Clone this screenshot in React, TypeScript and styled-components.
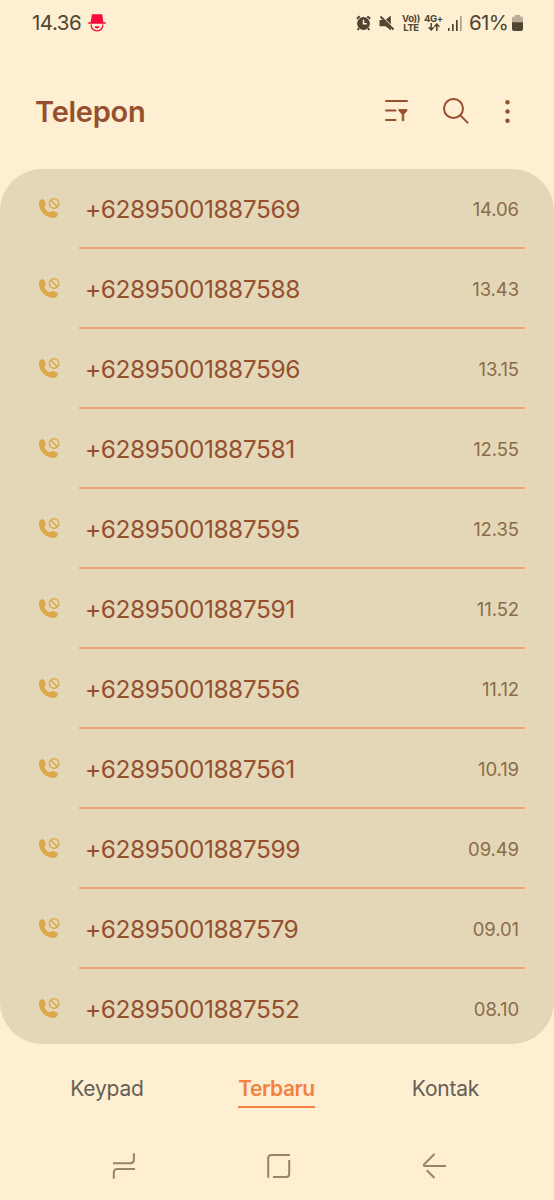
import React from "react";
import styled, { createGlobalStyle, css } from "styled-components";

const GlobalStyle = createGlobalStyle`
  * { box-sizing: border-box; }
  body { margin: 0; background: #feeed2; }
`;

const Screen = styled.div`
  width: 554px;
  height: 1200px;
  display: flex;
  flex-direction: column;
  overflow: hidden;
  background: #feeed2;
  font-family: Inter, Roboto, sans-serif;
`;

const StatusBar = styled.header`
  height: 46px;
  display: flex;
  align-items: center;
  padding: 0 31px 0 32px;
  color: #4f4632;
`;

const StatusText = styled.span<{ $width: number; $spacing: number; $gap?: number }>`
  width: ${(p) => p.$width}px;
  margin-left: ${(p) => p.$gap ?? 0}px;
  font-size: 20.5px;
  line-height: 24px;
  letter-spacing: ${(p) => p.$spacing}px;
  white-space: nowrap;
`;

const StatusIcons = styled.div`
  display: flex;
  align-items: center;
  margin-left: auto;
`;

const Icon = styled.svg<{ $gap?: number }>`
  display: block;
  flex: none;
  overflow: visible;
  margin-left: ${(p) => p.$gap ?? 0}px;
`;

const Network = styled.div<{ $gap: number; $width: number }>`
  display: flex;
  flex-direction: column;
  align-items: center;
  width: ${(p) => p.$width}px;
  height: 18px;
  margin-left: ${(p) => p.$gap}px;
  font-size: 9.5px;
  font-weight: 700;
  line-height: 9px;
  letter-spacing: -0.4px;
  white-space: nowrap;
`;

const TitleBar = styled.div`
  height: 123px;
  display: flex;
  align-items: center;
  padding: 7px 44px 0 35px;
  color: #94502f;
`;

const Title = styled.h1`
  flex: 1;
  margin: 0;
  padding-top: 1px;
  font-size: 29px;
  font-weight: 600;
  line-height: 36px;
  letter-spacing: -0.25px;
`;

const CallList = styled.ul`
  height: 875px;
  margin: 0;
  padding: 0;
  list-style: none;
  overflow: hidden;
  border-radius: 42px;
  background: #e4d7b8;
`;

const CallRow = styled.li`
  height: 80px;
  display: flex;
  padding: 0 29px 0 39px;
`;

const CallGlyph = styled.div`
  width: 40px;
  padding-top: 29px;
`;

const CallBody = styled.div<{ $last: boolean }>`
  flex: 1;
  display: flex;
  align-items: flex-start;
  justify-content: space-between;
  padding: 25px 6px 0 6px;
  border-bottom: 2px solid ${(p) => (p.$last ? "transparent" : "#efa679")};
`;

const PhoneNumber = styled.span`
  font-size: 24.5px;
  line-height: 30px;
  letter-spacing: -0.45px;
  color: #94502f;
`;

const CallTime = styled.time`
  font-size: 18.5px;
  line-height: 30px;
  letter-spacing: -0.1px;
  color: #8a6c48;
`;

const Tabs = styled.nav`
  height: 88px;
  display: flex;
  justify-content: space-between;
  padding: 30px 74px 0 70px;
`;

const Tab = styled.div<{ $active?: boolean; $width: number }>`
  width: ${(p) => p.$width}px;
  height: 34px;
  text-align: center;
  white-space: nowrap;
  font-size: 21px;
  line-height: 30px;
  letter-spacing: -0.2px;
  color: #655f55;
  ${(p) =>
    p.$active &&
    css`
      margin-left: -2px;
      font-weight: 600;
      letter-spacing: -0.5px;
      color: #f3813f;
      border-bottom: 2px solid #f3813f;
    `}
`;

const SystemNav = styled.footer`
  flex: 1;
  display: flex;
  justify-content: space-between;
  padding: 20px 108px 0 112px;
`;

const calls = [
  ["+62895001887569", "14.06"],
  ["+62895001887588", "13.43"],
  ["+62895001887596", "13.15"],
  ["+62895001887581", "12.55"],
  ["+62895001887595", "12.35"],
  ["+62895001887591", "11.52"],
  ["+62895001887556", "11.12"],
  ["+62895001887561", "10.19"],
  ["+62895001887599", "09.49"],
  ["+62895001887579", "09.01"],
  ["+62895001887552", "08.10"],
];

const HatFace = () => (
  <Icon width="18" height="18" viewBox="0 0 18 18" fill="none">
    <path d="M4 0.3h10.2l1.2 8h2.4v1.4H0.2V8.3h2.4z" fill="#f50b3c" />
    <path d="M3 10.5c.4 4 2.8 6.3 6 6.3s5.6-2.3 6-6.3" stroke="#f50b3c" strokeWidth="1.3" />
    <path d="M6.6 12.200h4.800c-.3 1.500-1.200 2.200-2.400 2.200s-2.100-.7-2.400-2.200z" fill="#f50b3c" />
  </Icon>
);

const Alarm = () => (
  <Icon width="15" height="16" viewBox="0 0 15 16" fill="none">
    <circle cx="7.500" cy="8.500" r="6.400" fill="#4f4632" />
    <path d="M.8 3.700L3.700 1.200M14.200 3.700l-2.900-2.500M3 13.200l-1.300 1.800M12 13.200l1.300 1.800" stroke="#4f4632" strokeWidth="2" />
    <path d="M7.500 4.800v4h3.300" stroke="#feeed2" strokeWidth="1.500" />
  </Icon>
);

const Muted = () => (
  <Icon $gap={8} width="16" height="16" viewBox="0 0 16 16" fill="none">
    <path d="M.5 5h3.400l7.900 7.800v2.700l-5.200-4.300H.5zM7 4.600l4.800-4.100v8.900z" fill="#4f4632" />
    <path d="M1.500 1.500l13 13" stroke="#4f4632" strokeWidth="1.900" />
  </Icon>
);

const DataArrows = () => (
  <Icon width="12" height="8" viewBox="0 0 12 8" fill="none" stroke="#4f4632" strokeWidth="1.500">
    <path d="M3.200 0v6.500M.7 4.200l2.500 2.600 2.500-2.600M8.800 8V1.200M6.300 3.700l2.500-2.600 2.500 2.600" />
  </Icon>
);

const Signal = () => (
  <Icon $gap={6} width="14" height="15" viewBox="0 0 14 15" fill="#4f4632">
    <rect x="0" y="12" width="1.600" height="3" />
    <rect x="4" y="8" width="1.700" height="7" />
    <rect x="8" y="4" width="1.700" height="11" />
    <rect x="12" y="0" width="1.700" height="15" opacity=".45" />
  </Icon>
);

const Battery = () => (
  <Icon width="11" height="16" viewBox="0 0 11 16">
    <path d="M3 0h5v1.500h1.200A1.800 1.800 0 0 1 11 3.300V8H0V3.300A1.800 1.800 0 0 1 1.800 1.500H3z" fill="#b9ad96" />
    <path d="M0 7.300h11v6.700a2 2 0 0 1-2 2H2a2 2 0 0 1-2-2z" fill="#4f4632" />
  </Icon>
);

const Filter = () => (
  <Icon width="23" height="22" viewBox="0 0 23 22" fill="none" stroke="#94502f" strokeWidth="2" strokeLinecap="round">
    <path d="M1 1h21M1 10.500h9.500M1 20h9.500" />
    <path d="M14 9.500h8v1.300l-3.200 3.400v6.500h-1.600v-6.500L14 10.800z" fill="#94502f" strokeWidth=".8" strokeLinejoin="round" />
  </Icon>
);

const Search = () => (
  <Icon $gap={35} width="26" height="26" viewBox="0 0 26 26" fill="none" stroke="#94502f" strokeWidth="2" strokeLinecap="round">
    <circle cx="10.500" cy="10.500" r="9.500" />
    <path d="M17.400 17.400l7.200 7.200" />
  </Icon>
);

const More = () => (
  <Icon $gap={36} width="5" height="23" viewBox="0 0 5 23" fill="#94502f">
    <circle cx="2.500" cy="2.300" r="2.200" />
    <circle cx="2.500" cy="11.500" r="2.200" />
    <circle cx="2.500" cy="20.700" r="2.200" />
  </Icon>
);

const BlockedCall = () => (
  <Icon width="21" height="21" viewBox="0 0 21 21" fill="none">
    <path
      d="M1.300 2.200C2.800.8 4.800.9 5.600 2.700l1.100 2.600c.4 1-.1 1.700-.9 2.500-.7.7-.5 1.300 0 2.100 1 1.700 2.300 3 4 4 .8.500 1.400.700 2.100 0 .8-.8 1.500-1.300 2.500-.9l2.900 1.200c1.800.8 1.900 2.700.5 4.200-1.500 1.600-3.800 2.100-6.400 1.200C5.800 17.700 2 14 .4 8.700-.3 6-.2 3.700 1.300 2.200z"
      fill="#dba747"
    />
    <circle cx="15" cy="5.500" r="4.700" stroke="#dba747" strokeWidth="1.500" />
    <path d="M11.700 2.200l6.600 6.600" stroke="#dba747" strokeWidth="1.500" />
  </Icon>
);

const navStroke = { fill: "none", stroke: "#9b8366", strokeWidth: 2 };

export default function App() {
  return (
    <Screen>
      <GlobalStyle />
      <StatusBar>
        <StatusText $width={56} $spacing={-0.5}>14.36</StatusText>
        <HatFace />
        <StatusIcons>
          <Alarm />
          <Muted />
          <Network $gap={8} $width={16}>
            <span>Vo))</span>
            <span>LTE</span>
          </Network>
          <Network $gap={6} $width={17}>
            <span>4G+</span>
            <DataArrows />
          </Network>
          <Signal />
          <StatusText $width={43} $spacing={-0.6} $gap={7}>61%</StatusText>
          <Battery />
        </StatusIcons>
      </StatusBar>
      <TitleBar>
        <Title>Telepon</Title>
        <Filter />
        <Search />
        <More />
      </TitleBar>
      <CallList>
        {calls.map(([number, time], i) => (
          <CallRow key={number}>
            <CallGlyph>
              <BlockedCall />
            </CallGlyph>
            <CallBody $last={i === calls.length - 1}>
              <PhoneNumber>{number}</PhoneNumber>
              <CallTime>{time}</CallTime>
            </CallBody>
          </CallRow>
        ))}
      </CallList>
      <Tabs>
        <Tab $width={74}>Keypad</Tab>
        <Tab $width={77} $active>Terbaru</Tab>
        <Tab $width={69}>Kontak</Tab>
      </Tabs>
      <SystemNav>
        <Icon width="24" height="28" viewBox="0 0 24 28" {...navStroke}>
          <path d="M1 11.200h17.500c2.200 0 3.400-1.200 3.400-3.400V1.200M23 17H5.200C3 17 1.800 18.200 1.800 20.400v6.300" />
        </Icon>
        <Icon width="24" height="28" viewBox="0 0 24 28" {...navStroke}>
          <path d="M1.200 25.800V6c0-2 1-3 3-3H23M22.200 8v14c0 2-1 3-3 3H6" />
        </Icon>
        <Icon width="24" height="28" viewBox="0 0 24 28" {...navStroke}>
          <path d="M12.500 2L2.200 12.300c-.9.900-.5 1.700.6 1.700H24M4.800 18.200l7.700 7.800" />
        </Icon>
      </SystemNav>
    </Screen>
  );
}
